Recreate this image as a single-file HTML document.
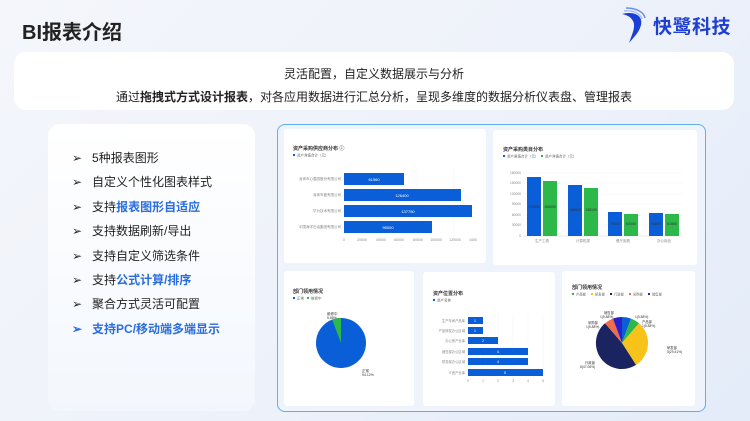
<!DOCTYPE html>
<html><head><meta charset="utf-8"><style>
*{margin:0;padding:0;box-sizing:border-box}
body{width:750px;height:421px;overflow:hidden;position:relative;font-family:"Liberation Sans","Noto Sans CJK SC",sans-serif;background:linear-gradient(135deg,#f4f6fb 0%,#eef2fa 50%,#e4ecf9 100%)}
.abs{position:absolute}
.card{background:#fff;border-radius:3px}
</style></head><body>
<div class="abs" style="left:22px;top:16px;font-size:20px;font-weight:bold;color:#222">BI报表介绍</div>
<svg class="abs" style="left:618px;top:6px" width="34" height="38" viewBox="0 0 34 38">
<path d="M4 8 C16 5 25 9 23 19 C21 27 15 32 11 37 C14 28 18 21 15 15 C13 11 9 9 4 8Z" fill="#1a3fd6"/>
<path d="M8 2 C18 2 26 6 27 12" stroke="#6a8cf0" stroke-width="1.5" fill="none"/>
<path d="M6 5 C15 4 22 7 24 13" stroke="#9bb4f7" stroke-width="1.2" fill="none"/>
</svg>
<div class="abs" style="left:653px;top:12px;font-size:19px;font-weight:bold;color:#1f3fd0;letter-spacing:0.5px">快鹭科技</div>
<div class="abs" style="left:14px;top:52px;width:720px;height:58px;background:#fff;border-radius:12px;text-align:center;font-size:12px;color:#222">
<div style="margin-top:13px">灵活配置，自定义数据展示与分析</div>
<div style="margin-top:6px">通过<b>拖拽式方式设计报表</b>，对各应用数据进行汇总分析，呈现多维度的数据分析仪表盘、管理报表</div>
</div>
<div class="abs" style="left:48px;top:124px;width:207px;height:287px;background:linear-gradient(180deg,#fff,#f3f7fd);border-radius:12px;font-size:12px;color:#222">
<div style="position:absolute;left:24px;top:22px;line-height:24.4px">
<div>➢&nbsp;&nbsp;&nbsp;5种报表图形</div>
<div>➢&nbsp;&nbsp;&nbsp;自定义个性化图表样式</div>
<div>➢&nbsp;&nbsp;&nbsp;支持<b style="color:#2a6de0">报表图形自适应</b></div>
<div>➢&nbsp;&nbsp;&nbsp;支持数据刷新/导出</div>
<div>➢&nbsp;&nbsp;&nbsp;支持自定义筛选条件</div>
<div>➢&nbsp;&nbsp;&nbsp;支持<b style="color:#2a6de0">公式计算/排序</b></div>
<div>➢&nbsp;&nbsp;&nbsp;聚合方式灵活可配置</div>
<div style="color:#2a6de0;font-weight:bold">➢&nbsp;&nbsp;&nbsp;支持PC/移动端多端显示</div>
</div></div>
<div class="abs" style="left:277px;top:124px;width:429px;height:288px;border:1.5px solid #5fb0ea;border-radius:8px;background:#eef3fc"></div>
<!-- chart 1 -->
<div class="abs card" style="left:284px;top:129px;width:202px;height:134px">
<svg width="202" height="134" font-family="Liberation Sans,Noto Sans CJK SC,sans-serif">
<text x="9" y="21" font-size="5" font-weight="bold" fill="#333">资产采购供应商分布 ⓘ</text>
<rect x="9" y="25" width="2" height="2" fill="#0a5fd8"/><text x="13" y="27.5" font-size="3.5" fill="#666">资产净值合计（元）</text>
<g stroke="#eee" stroke-width="0.4"><line x1="96" y1="40" x2="96" y2="110"/><line x1="133" y1="40" x2="133" y2="110"/><line x1="170" y1="40" x2="170" y2="110"/></g>
<rect x="60" y="44" width="60" height="12" fill="#0a5fd8"/><text x="90" y="52" font-size="4" fill="#fff" text-anchor="middle">61560</text>
<rect x="60" y="60" width="117" height="12" fill="#0a5fd8"/><text x="118" y="68" font-size="4" fill="#fff" text-anchor="middle">126400</text>
<rect x="60" y="76" width="128" height="12" fill="#0a5fd8"/><text x="124" y="84" font-size="4" fill="#fff" text-anchor="middle">137750</text>
<rect x="60" y="92" width="88" height="12" fill="#0a5fd8"/><text x="104" y="100" font-size="4" fill="#fff" text-anchor="middle">95000</text>
<g font-size="3.5" fill="#888" text-anchor="end"><text x="57" y="51">深圳市心善园股份有限公司</text><text x="57" y="67">深圳市盛有限公司</text><text x="57" y="83">华为技术有限公司</text><text x="57" y="99">中国海洋石油集团有限公司</text></g>
<g font-size="3.5" fill="#888" text-anchor="middle"><text x="60" y="112">0</text><text x="78" y="112">20000</text><text x="97" y="112">40000</text><text x="115" y="112">60000</text><text x="134" y="112">80000</text><text x="152" y="112">100000</text><text x="171" y="112">120000</text><text x="189" y="112">1400</text></g>
</svg></div>
<!-- chart 2 -->
<div class="abs card" style="left:493px;top:130px;width:204px;height:135px">
<svg width="204" height="135" font-family="Liberation Sans,Noto Sans CJK SC,sans-serif">
<text x="10" y="21" font-size="5" font-weight="bold" fill="#333">资产采购类目分布</text>
<rect x="10" y="25" width="2" height="2" fill="#0a5fd8"/><text x="14" y="27.5" font-size="3.5" fill="#666">资产原值合计（元）</text>
<rect x="48" y="25" width="2" height="2" fill="#2db84a"/><text x="52" y="27.5" font-size="3.5" fill="#666">资产净值合计（元）</text>
<g stroke="#eee" stroke-width="0.4"><line x1="30" y1="43" x2="190" y2="43"/><line x1="30" y1="53" x2="190" y2="53"/><line x1="30" y1="64" x2="190" y2="64"/><line x1="30" y1="74" x2="190" y2="74"/><line x1="30" y1="85" x2="190" y2="85"/><line x1="30" y1="95" x2="190" y2="95"/><line x1="30" y1="106" x2="190" y2="106" stroke="#ccc"/></g>
<g font-size="3.3" fill="#888" text-anchor="end"><text x="28" y="44">180000</text><text x="28" y="54">150000</text><text x="28" y="65">120000</text><text x="28" y="75">90000</text><text x="28" y="86">60000</text><text x="28" y="96">30000</text><text x="28" y="107">0</text></g>
<rect x="34" y="47" width="14" height="59" fill="#0a5fd8"/><rect x="50" y="51" width="14" height="55" fill="#2db84a"/>
<rect x="75" y="55" width="14" height="51" fill="#0a5fd8"/><rect x="91" y="58" width="14" height="48" fill="#2db84a"/>
<rect x="115" y="82" width="14" height="24" fill="#0a5fd8"/><rect x="131" y="84" width="14" height="22" fill="#2db84a"/>
<rect x="156" y="83" width="14" height="23" fill="#0a5fd8"/><rect x="172" y="84" width="14" height="22" fill="#2db84a"/>
<g font-size="3.5" fill="#333" text-anchor="middle"><text x="41" y="78">170000</text><text x="57" y="78">158000</text><text x="82" y="81">145500</text><text x="98" y="81">138150</text><text x="122" y="95">70000</text><text x="138" y="95">63000</text><text x="163" y="95">64800</text><text x="179" y="95">61560</text></g>
<g font-size="3.5" fill="#888" text-anchor="middle"><text x="49" y="112">生产工具</text><text x="90" y="112">计算机类</text><text x="130" y="112">餐厅用具</text><text x="171" y="112">办公用品</text></g>
</svg></div>
<!-- chart 3 pie -->
<div class="abs card" style="left:284px;top:271px;width:130px;height:135px">
<svg width="130" height="135" font-family="Liberation Sans,Noto Sans CJK SC,sans-serif">
<text x="9" y="22" font-size="5" font-weight="bold" fill="#333">部门领用情况</text>
<rect x="9" y="26" width="2" height="2" fill="#0a5fd8"/><text x="13" y="28.5" font-size="3.5" fill="#666">正常</text>
<rect x="23" y="26" width="2" height="2" fill="#2db84a"/><text x="27" y="28.5" font-size="3.5" fill="#666">维修中</text>
<circle cx="57" cy="72" r="25" fill="#0a5fd8"/>
<path d="M57 72 L57 47 A25 25 0 0 0 48.2 48.6 Z" fill="#2db84a"/>
<text x="43" y="44" font-size="3.5" fill="#333">维修中</text><text x="43" y="48" font-size="3.5" fill="#333">5.88%</text>
<text x="78" y="101" font-size="3.5" fill="#333">正常</text><text x="78" y="105" font-size="3.5" fill="#333">94.12%</text>
</svg></div>
<!-- chart 4 -->
<div class="abs card" style="left:423px;top:272px;width:132px;height:134px">
<svg width="132" height="134" font-family="Liberation Sans,Noto Sans CJK SC,sans-serif">
<text x="10" y="23" font-size="5" font-weight="bold" fill="#333">资产位置分布</text>
<rect x="10" y="27" width="2" height="2" fill="#0a5fd8"/><text x="14" y="29.5" font-size="3.5" fill="#666">资产名称</text>
<g stroke="#eee" stroke-width="0.4"><line x1="60" y1="42" x2="60" y2="106"/><line x1="75" y1="42" x2="75" y2="106"/><line x1="90" y1="42" x2="90" y2="106"/><line x1="105" y1="42" x2="105" y2="106"/><line x1="120" y1="42" x2="120" y2="106"/></g>
<rect x="45" y="45" width="15" height="7" fill="#0a5fd8"/><text x="52" y="50" font-size="3.5" fill="#fff" text-anchor="middle">1</text>
<rect x="45" y="55" width="15" height="7" fill="#0a5fd8"/><text x="52" y="60" font-size="3.5" fill="#fff" text-anchor="middle">1</text>
<rect x="45" y="65" width="30" height="7" fill="#0a5fd8"/><text x="60" y="70" font-size="3.5" fill="#fff" text-anchor="middle">2</text>
<rect x="45" y="76" width="60" height="7" fill="#0a5fd8"/><text x="75" y="81" font-size="3.5" fill="#fff" text-anchor="middle">4</text>
<rect x="45" y="86" width="60" height="7" fill="#0a5fd8"/><text x="75" y="91" font-size="3.5" fill="#fff" text-anchor="middle">4</text>
<rect x="45" y="97" width="75" height="7" fill="#0a5fd8"/><text x="82" y="102" font-size="3.5" fill="#fff" text-anchor="middle">5</text>
<g font-size="3.3" fill="#888" text-anchor="end"><text x="42" y="50">生产车间产品库</text><text x="42" y="60">产品研发办公区域</text><text x="42" y="70">办公资产仓库</text><text x="42" y="81">销售部办公区域</text><text x="42" y="91">财务部办公区域</text><text x="42" y="102">IT资产仓库</text></g>
<g font-size="3.3" fill="#888" text-anchor="middle"><text x="45" y="110">0</text><text x="60" y="110">1</text><text x="75" y="110">2</text><text x="90" y="110">3</text><text x="105" y="110">4</text><text x="120" y="110">5</text></g>
</svg></div>
<!-- chart 5 -->
<div class="abs card" style="left:562px;top:271px;width:133px;height:135px">
<svg width="133" height="135" font-family="Liberation Sans,Noto Sans CJK SC,sans-serif">
<text x="10" y="18" font-size="5" font-weight="bold" fill="#333">部门领用情况</text>
<g font-size="3.3" fill="#666"><rect x="10" y="22" width="2" height="2" fill="#2db84a"/><text x="14" y="24.5">产品部</text><rect x="29" y="22" width="2" height="2" fill="#f7c21a"/><text x="33" y="24.5">研发部</text><rect x="48" y="22" width="2" height="2" fill="#1a2460"/><text x="52" y="24.5">行政部</text><rect x="67" y="22" width="2" height="2" fill="#f26b4a"/><text x="71" y="24.5">采购部</text><rect x="86" y="22" width="2" height="2" fill="#2a1fc8"/><text x="90" y="24.5">销售部</text></g>
<g transform="translate(60,72)">
<path d="M0 0 L0 -26 A26 26 0 0 1 9.1 -24.4Z" fill="#0a5fd8"/>
<path d="M0 0 L9.1 -24.4 A26 26 0 0 1 17 -19.7Z" fill="#2db84a"/>
<path d="M0 0 L17 -19.7 A26 26 0 0 1 14 21.9Z" fill="#f7c21a"/>
<path d="M0 0 L14 21.9 A26 26 0 0 1 -17 -19.7Z" fill="#1a2460"/>
<path d="M0 0 L-17 -19.7 A26 26 0 0 1 -9.1 -24.4Z" fill="#f26b4a"/>
<path d="M0 0 L-9.1 -24.4 A26 26 0 0 1 0 -26Z" fill="#2a1fc8"/>
</g>
<g font-size="3.3" fill="#333"><text x="42" y="43">销售部</text><text x="38" y="47">1(5.88%)</text><text x="26" y="53">采购部</text><text x="24" y="57">1(5.88%)</text><text x="73" y="47">1(5.88%)</text><text x="80" y="52">产品部</text><text x="80" y="56">1(5.88%)</text><text x="105" y="78">研发部</text><text x="105" y="82">5(29.41%)</text><text x="23" y="93">行政部</text><text x="18" y="97">8(47.06%)</text></g>
</svg></div>
</body></html>
